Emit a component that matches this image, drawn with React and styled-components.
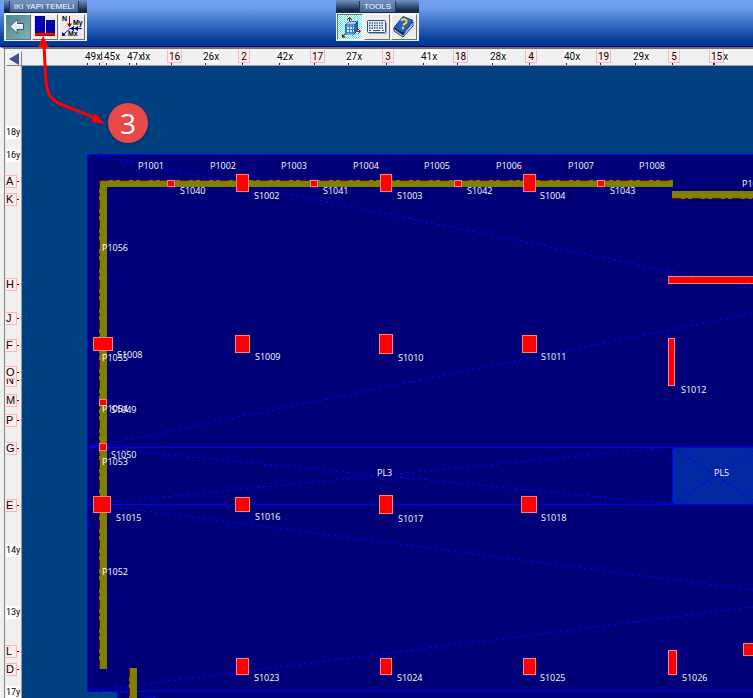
import styled, { createGlobalStyle } from "styled-components";

const columnMarks = [
  { name: "1", at: 99, main: true },
  { name: "49x", at: 87 },
  { name: "45x", at: 106 },
  { name: "38x", at: 136 },
  { name: "47x", at: 129 },
  { name: "16", at: 171, main: true },
  { name: "26x", at: 205 },
  { name: "2", at: 242, main: true },
  { name: "42x", at: 279 },
  { name: "17", at: 314, main: true },
  { name: "27x", at: 348 },
  { name: "3", at: 386, main: true },
  { name: "41x", at: 423 },
  { name: "18", at: 457, main: true },
  { name: "28x", at: 492 },
  { name: "4", at: 529, main: true },
  { name: "40x", at: 566 },
  { name: "19", at: 600, main: true },
  { name: "29x", at: 635 },
  { name: "5", at: 672, main: true },
  { name: "30x", at: 714 },
  { name: "15", at: 713, main: true },
];

const rowMarks = [
  { name: "18y", at: 132 },
  { name: "16y", at: 155 },
  { name: "A", at: 181, main: true },
  { name: "K", at: 199, main: true },
  { name: "H", at: 284, main: true },
  { name: "J", at: 318, main: true },
  { name: "F", at: 345, main: true },
  { name: "N", at: 380, main: true },
  { name: "O", at: 372, main: true },
  { name: "M", at: 400, main: true },
  { name: "P", at: 420, main: true },
  { name: "G", at: 448, main: true },
  { name: "E", at: 505, main: true },
  { name: "14y", at: 550 },
  { name: "13y", at: 612 },
  { name: "L", at: 651, main: true },
  { name: "D", at: 669, main: true },
  { name: "17y", at: 692 },
];

// x, y, width, height
const columns = [
  [167, 180, 8, 7], [310, 180, 8, 7], [454, 180, 8, 7], [597, 180, 8, 7],
  [236, 174, 13, 18], [380, 174, 12, 18], [523, 174, 13, 18],
  [668, 276, 400, 8],
  [93, 337, 20, 14], [235, 335, 15, 18], [379, 334, 14, 20], [522, 335, 15, 18],
  [668, 338, 7, 48],
  [99, 399, 8, 7], [99, 443, 8, 8],
  [93, 496, 18, 17], [235, 497, 15, 15], [379, 495, 14, 19], [521, 496, 16, 17],
  [236, 658, 13, 17], [380, 658, 12, 17], [523, 658, 13, 17],
  [668, 650, 9, 25], [743, 643, 14, 13],
];

const diagonals = [
  [90, 154, 753, 288],
  [90, 447, 753, 313],
  [90, 447, 672, 504],
  [90, 504, 672, 447],
  [90, 504, 753, 590],
  [90, 691, 753, 607],
  [118, 691, 180, 702],
  [672, 447, 760, 504],
  [672, 504, 760, 447],
];

const names = [
  ["P1001", 138, 169], ["P1002", 210, 169], ["P1003", 281, 169], ["P1004", 353, 169],
  ["P1005", 424, 169], ["P1006", 496, 169], ["P1007", 568, 169], ["P1008", 639, 169],
  ["P1009", 742, 187],
  ["S1040", 180, 194], ["S1041", 323, 194], ["S1042", 467, 194], ["S1043", 610, 194],
  ["S1002", 254, 199], ["S1003", 397, 199], ["S1004", 540, 199],
  ["P1056", 102, 251],
  ["S1008", 117, 358], ["P1055", 102, 361],
  ["S1009", 255, 360], ["S1010", 398, 361], ["S1011", 541, 360], ["S1012", 681, 393],
  ["P1054", 102, 412], ["S1049", 111, 413],
  ["S1050", 111, 458], ["P1053", 102, 465],
  ["PL3", 377, 476], ["PL5", 714, 476],
  ["S1015", 116, 521], ["S1016", 255, 520], ["S1017", 398, 522], ["S1018", 541, 521],
  ["P1052", 102, 575],
  ["S1023", 254, 681], ["S1024", 397, 681], ["S1025", 540, 681], ["S1026", 682, 681],
];

const BackIcon = () => (
  <svg width="24" height="24" viewBox="0 0 24 24">
    <path d="M4 11.5 L11 4.5 V8.5 H17.5 V14.5 H11 V18.5 Z" fill="#ececec" stroke="#2c5a64" strokeWidth="1" />
    <path d="M5.5 11.5 L10.500 6.5 V9.5 H16.5" fill="none" stroke="#fff" />
  </svg>
);

const BuildingIcon = () => (
  <svg width="24" height="24" viewBox="0 0 24 24" shapeRendering="crispEdges">
    <rect x="2" y="1" width="10" height="17" fill="#00006a" />
    <rect x="13" y="5" width="9" height="13" fill="#00006a" />
    {[2, 6, 10, 14].map((y) => (
      <g key={y} fill="#0000e0">
        <rect x="3" y={y} width="4" height="3" />
        <rect x="8" y={y} width="3" height="3" />
        {y > 2 && <rect x="14" y={y} width="3" height="3" />}
        {y > 2 && <rect x="18" y={y} width="3" height="3" />}
      </g>
    ))}
    <rect x="2" y="18" width="20" height="3" fill="#ff0000" />
    <path d="M2 20.5 H22" stroke="#b00000" />
  </svg>
);

const ForcesIcon = () => (
  <svg width="24" height="24" viewBox="0 0 24 24">
    <path d="M9.500 1 V10" stroke="#900000" />
    <path d="M7 8.500 H12 L9.500 12.500 Z" fill="#900000" />
    <path d="M10 13.500 H22 M10 13.500 L3 20" stroke="#000090" />
    <path d="M10 13.500 L14 11 V16 Z M14 13.500 L18 11 V16 Z M2 21 V17 L6 20.500 Z" fill="#0000a0" />
    <IconText x="2" y="6">N</IconText>
    <IconText x="13" y="10">My</IconText>
    <IconText x="8" y="21">Mx</IconText>
  </svg>
);

const CubeIcon = () => (
  <svg width="24" height="24" viewBox="0 0 24 24">
    <defs>
      <pattern id="mesh" width="2" height="2" patternUnits="userSpaceOnUse">
        <rect width="2" height="2" fill="#fff" />
        <path d="M0 0h1v1h-1z M1 1h1v1h-1z" fill="#50f0f0" />
      </pattern>
      <pattern id="windows" width="3" height="3" patternUnits="userSpaceOnUse">
        <rect width="3" height="3" fill="#3e82d4" />
        <rect width="2" height="2" fill="#d0e8ff" />
      </pattern>
    </defs>
    <rect width="24" height="24" fill="url(#mesh)" />
    <path d="M11.500 9 V3 M18 16.500 H22 M8 18 L5 21" stroke="#c00000" />
    <path d="M9 5 L11.500 2.500 L14 5 M20 14 L22.500 16.500 L20 19" fill="none" stroke="#c00000" />
    <path d="M4 19 V22.500 H8 Z" fill="#a00000" />
    <path d="M7.500 10 L11 6.500 H19.500 L16.500 10 Z" fill="#a8d0fa" stroke="#4078b8" />
    <path d="M16.500 10 L19.500 6.500 V15 L16.500 19 Z" fill="#2464b4" stroke="#205090" />
    <rect x="7.500" y="10" width="9" height="9" fill="url(#windows)" stroke="#3068b0" />
  </svg>
);

const KeyboardIcon = () => (
  <svg width="24" height="24" viewBox="0 0 24 24">
    <rect x="2.500" y="5.500" width="18" height="12" rx="1" fill="#eef2fa" stroke="#34507c" />
    <path d="M4 18.500 H21.500 V8" fill="none" stroke="#a0acc0" />
    <path d="M4 8 H19 M4 10.500 H19 M4 13 H19" stroke="#3c5880" strokeWidth="1.400" strokeDasharray="1.500 1" />
    <path d="M4 15.500 H6 M8 15.500 H15 M17 15.500 H19" stroke="#3c5880" />
  </svg>
);

const HelpBookIcon = () => (
  <svg width="24" height="24" viewBox="0 0 24 24">
    <path d="M2 13 L11 19 L21 7 V11 L11 22 L2 16 Z" fill="#fff" stroke="#103878" />
    <path d="M4 16 L11 20.500 L20 10" fill="none" stroke="#8898b0" />
    <path d="M2 12.500 L11 1.500 L21 5.500 L11 18.500 Z" fill="#2463c4" stroke="#10408c" />
    <path d="M2 13 L11 19 L12 17" fill="none" stroke="#082c6c" strokeWidth="2" />
    <path d="M9.500 6 C10 3 15 4 14.500 7 C14 9 11.500 8.500 11.500 10.500" fill="none" stroke="#ffe030" strokeWidth="2" />
    <circle cx="11" cy="13" r="1.200" fill="#ffe030" />
  </svg>
);

const Plan = () => (
  <Drawing role="img" aria-label="Foundation plan">
    {/* drawing coordinates start at the window corner */}
    <g transform="translate(-22 -66)">
      <g shapeRendering="crispEdges">
        <path d="M87.500 154.500 H2400 V2000 H117.500 V691.500 H87.500 Z" fill="#000078" stroke="#0000ff" />
        <rect x="672" y="447" width="88" height="57" fill="#0028a0" />
        <path d="M88 447.500 H2400 M88 504.500 H2400 M117 691.500 H2400 M672.500 447 V504" fill="none" stroke="#0000ff" />
        {diagonals.map(([x1, y1, x2, y2]) => (
          <line key={`${x1}-${y1}-${x2}-${y2}`} x1={x1} y1={y1} x2={x2} y2={y2} stroke="#0000ff" strokeDasharray="3 3" />
        ))}
        <circle cx="94" cy="447" r="2" fill="#0000ff" />
        <g fill="#808000">
          <rect x="100" y="180" width="573" height="7" />
          <rect x="99" y="180" width="8" height="489" />
          <rect x="672" y="191" width="700" height="8" />
          <rect x="129" y="668" width="8" height="900" />
        </g>
        <path
          d="M100 180.500 H673 M99.500 180 V669 M672 198.500 H1372 M129.500 668 V1500"
          fill="none"
          stroke="#800000"
          strokeDasharray="9 4 3 4"
        />
        {columns.map(([x, y, w, h]) => (
          <rect
            key={`${x}-${y}`}
            x={x + 0.5}
            y={y + 0.5}
            width={w - 1}
            height={h - 1}
            fill="#ff0000"
            stroke="#ff8080"
          />
        ))}
      </g>
      {names.map(([name, x, y]) => (
        <PlanText key={name} x={x} y={y}>{name}</PlanText>
      ))}
    </g>
  </Drawing>
);

const App = () => {
  return (
    <Page>
      <GlobalStyle />
      <Toolbar>
        <Group>
          <GroupTitle><span>IKI YAPI TEMELI</span></GroupTitle>
          <Buttons>
            <ToolButton $tone="teal" aria-label="Back"><BackIcon /></ToolButton>
            <ToolButton aria-label="Building"><BuildingIcon /></ToolButton>
            <ToolButton aria-label="Forces"><ForcesIcon /></ToolButton>
          </Buttons>
        </Group>
        <Group>
          <GroupTitle $short><span>TOOLS</span></GroupTitle>
          <Buttons>
            <ToolButton $pressed aria-label="3D view"><CubeIcon /></ToolButton>
            <ToolButton aria-label="Keyboard"><KeyboardIcon /></ToolButton>
            <ToolButton aria-label="Help"><HelpBookIcon /></ToolButton>
          </Buttons>
        </Group>
      </Toolbar>

      <Workspace>
        <Corner>
          <ScrollButton aria-label="Scroll left">
            <svg width="10" height="12" viewBox="0 0 10 12"><path d="M10 0 V12 L0 6 Z" fill="#404f96" /></svg>
          </ScrollButton>
        </Corner>
        <TopRuler>
          {columnMarks.map(({ name, at, main }) => (
            <ColumnMark key={name} $main={main} style={{ left: at - 22 - (main ? 4 : 2) }}>{name}</ColumnMark>
          ))}
        </TopRuler>
        <SideRuler>
          {rowMarks.map(({ name, at, main }) => (
            <RowMark key={name} $main={main} style={{ top: at - 66 - 6 }}>{name}</RowMark>
          ))}
        </SideRuler>
        <Canvas><Plan /></Canvas>
      </Workspace>

      <Callout>
        <svg width="110" height="95" viewBox="0 30 110 95">
          <path d="M44 45 C46 80 45 94 54 100 C62 107 77 109 96 119" fill="none" stroke="#ff0000" strokeWidth="3" />
          <path d="M43 36 L49 47 H38 Z M105 124 L95 113 L91 122 Z" fill="#ff0000" />
        </svg>
        <Step>3</Step>
      </Callout>
    </Page>
  );
};

const GlobalStyle = createGlobalStyle`
  * {
    box-sizing: border-box;
  }

  body {
    margin: 0;
    font-family: "Liberation Sans", sans-serif;
  }
`;

const Page = styled.div`
  position: relative;
  display: flex;
  flex-direction: column;
  min-height: 100vh;
  overflow: hidden;
`;

const Toolbar = styled.header`
  display: grid;
  grid-template-columns: 332px 1fr;
  height: 47px;
  padding-left: 4px;
  border-bottom: 1px solid #000080;
  background: linear-gradient(#70a0f0 0, #6c9ceb 8px, #003c98 41px, #003794 100%);
`;

const Group = styled.div`
  width: 83px;
  height: 41px;
  background: #f0f0f0;
`;

const GroupTitle = styled.div`
  height: 13px;
  padding: ${(props) => (props.$short ? "1px 23px" : "1px 8px 1px 5px")};
  background: linear-gradient(#6f94c8, #14284a 80%);

  span {
    display: block;
    height: 11px;
    border: 1px solid #22375c;
    border-width: 0 1px;
    background: linear-gradient(#7393bd, #416594);
    color: white;
    font-size: 8px;
    line-height: 11px;
    text-align: center;
    white-space: nowrap;
  }
`;

const Buttons = styled.div`
  display: flex;
  gap: 1px;
  padding: 1px;
`;

const ToolButton = styled.button`
  display: flex;
  align-items: center;
  justify-content: center;
  width: 26px;
  height: 26px;
  padding: 0;
  border: 1px solid;
  border-color: ${(props) => (props.$pressed ? "#707070 #fff #fff #707070" : "#fff #707070 #707070 #fff")};
  background: ${(props) => (props.$tone === "teal" ? "linear-gradient(135deg, #4c8490, #82b0b6)" : "#ececec")};
`;

const IconText = styled.text`
  font-family: "Liberation Sans", sans-serif;
  font-size: 7px;
  font-weight: bold;
`;

const Workspace = styled.main`
  flex: 1;
  display: grid;
  grid-template-columns: 22px 1fr;
  grid-template-rows: 19px 1fr;
  background: #f0f0f0;
`;

const Corner = styled.div`
  padding: 2px 0 0 2px;
  border-top: 2px solid #707070;
  border-left: 4px solid #f0f0f0;
  box-shadow: inset 1px 0 #808080;
`;

const ScrollButton = styled.button`
  display: flex;
  align-items: center;
  justify-content: center;
  width: 16px;
  height: 15px;
  padding: 0;
  border: 1px solid;
  border-color: #fff #808080 #808080 #fff;
  background: #f0f0f0;
`;

const TopRuler = styled.div`
  position: relative;
  border-top: 2px solid #707070;
  border-bottom: 1px solid #a0a0a0;
  overflow: hidden;
`;

const SideRuler = styled.div`
  position: relative;
  border-left: 4px solid #f0f0f0;
  border-right: 1px solid #a0a0a0;
  box-shadow: inset 1px 0 #808080;
  overflow: hidden;
`;

const Mark = styled.span`
  position: absolute;
  height: 13px;
  border: 0 solid #ffb4b4;
  background: ${(props) => (props.$main ? "#ffecec" : "#fff")};
  font-size: 10px;
  line-height: 13px;

  &::after {
    content: "";
    position: absolute;
    background: #800000;
  }
`;

const ColumnMark = styled(Mark)`
  top: 1px;
  min-width: 12px;
  padding: ${(props) => (props.$main ? "0 1px" : "0")};
  border-width: ${(props) => (props.$main ? "0 1px 1px" : "0")};
  font-family: Roboto, sans-serif;
  text-align: center;

  &::after {
    top: 13px;
    left: ${(props) => (props.$main ? 3 : 2)}px;
    width: 1px;
    height: 2px;
  }
`;

const RowMark = styled(Mark)`
  left: 2px;
  width: ${(props) => (props.$main ? 11 : 14)}px;
  border-width: ${(props) => (props.$main ? "1px 1px 1px 0" : "0")};
  font-size: ${(props) => (props.$main ? 11 : 9)}px;
  font-family: ${(props) => (props.$main ? "inherit" : "Roboto, sans-serif")};
  line-height: ${(props) => (props.$main ? 11 : 13)}px;

  &::after {
    display: ${(props) => (props.$main ? "block" : "none")};
    top: 5px;
    left: 11px;
    width: 2px;
    height: 1px;
  }
`;

const Canvas = styled.section`
  position: relative;
  background: #004080;
  overflow: hidden;
`;

const Drawing = styled.svg`
  position: absolute;
  inset: 0;
  width: 100%;
  height: 100%;
`;

const PlanText = styled.text`
  fill: #fff;
  font-family: "Open Sans", sans-serif;
  font-size: 9px;
`;

const Callout = styled.div`
  position: absolute;
  top: 30px;
  left: 0;
  display: flex;
  align-items: flex-end;
  pointer-events: none;
`;

const Step = styled.strong`
  width: 40px;
  height: 40px;
  margin: 0 0 -18px -2px;
  border-radius: 50%;
  background: #e84848;
  box-shadow: 0 1px 3px rgba(0, 0, 0, 0.4);
  color: white;
  font: 28px/40px "Open Sans", sans-serif;
  text-align: center;
`;

export default App;
